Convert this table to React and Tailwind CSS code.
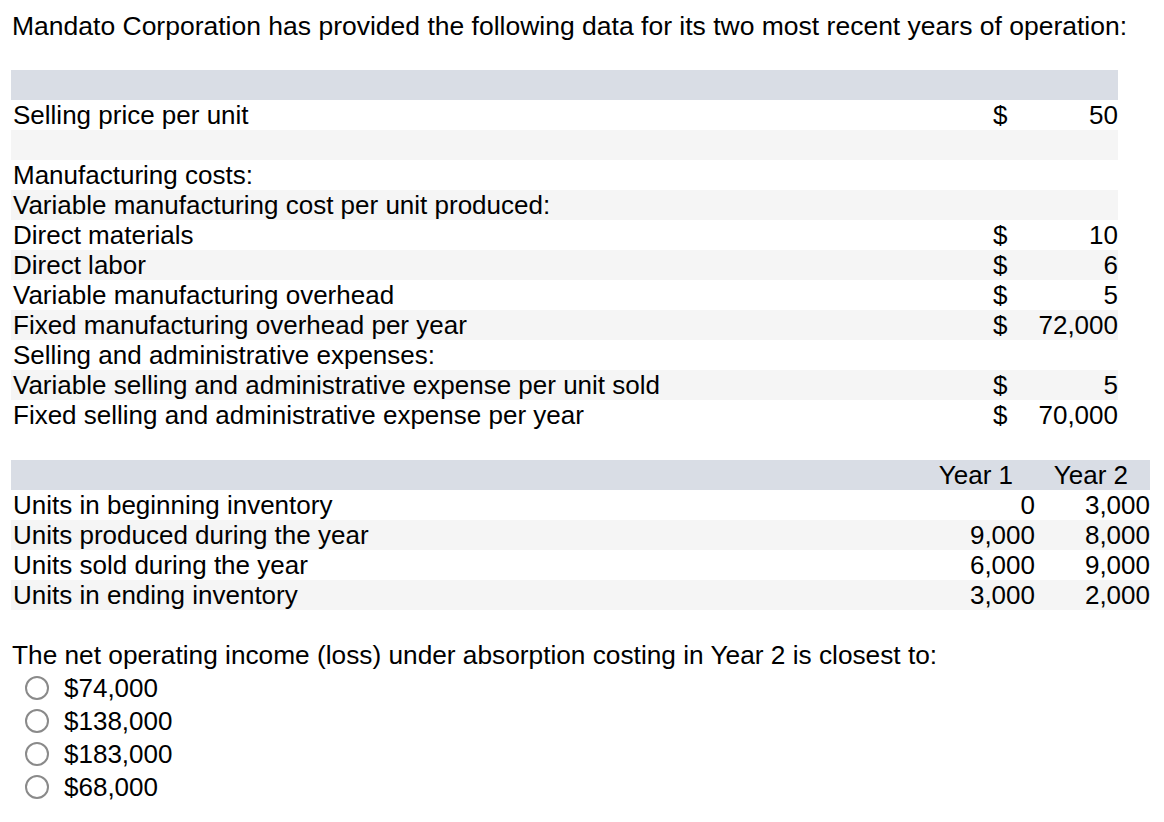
import React from "react";

// first table: label, dollar sign, amount, shaded row
const costRows = [
  { label: "Selling price per unit", dollar: true, amount: "50" },
  { label: "", shade: true },
  { label: "Manufacturing costs:" },
  { label: "Variable manufacturing cost per unit produced:", shade: true },
  { label: "Direct materials", dollar: true, amount: "10" },
  { label: "Direct labor", dollar: true, amount: "6", shade: true },
  { label: "Variable manufacturing overhead", dollar: true, amount: "5" },
  { label: "Fixed manufacturing overhead per year", dollar: true, amount: "72,000", shade: true },
  { label: "Selling and administrative expenses:" },
  { label: "Variable selling and administrative expense per unit sold", dollar: true, amount: "5", shade: true },
  { label: "Fixed selling and administrative expense per year", dollar: true, amount: "70,000" },
];

const unitRows = [
  { label: "Units in beginning inventory", y1: "0", y2: "3,000" },
  { label: "Units produced during the year", y1: "9,000", y2: "8,000", shade: true },
  { label: "Units sold during the year", y1: "6,000", y2: "9,000" },
  { label: "Units in ending inventory", y1: "3,000", y2: "2,000", shade: true },
];

const choices = ["$74,000", "$138,000", "$183,000", "$68,000"];

export default function App() {
  return (
    <div className="w-[1164px] h-[822px] bg-white text-black text-[26px] leading-[30px] font-['Liberation_Sans',Arial,sans-serif]">
      <p className="pl-3 pt-[11px] text-[26.5px] whitespace-nowrap">
        Mandato Corporation has provided the following data for its two most recent years of operation:
      </p>

      {/* cost data */}
      <div className="mt-[29px] ml-[11px] w-[1107px]">
        <div className="h-[30px] bg-[#d9dde5]"></div>
        {costRows.map((row, i) => (
          <div key={i} className={`flex h-[30px] ${row.shade ? "bg-[#f5f5f5]" : "bg-white"}`}>
            <span className="flex-1 pl-[2px] whitespace-nowrap">{row.label}</span>
            <span className="w-[30px]">{row.dollar ? "$" : ""}</span>
            <span className="w-[95px] text-right">{row.amount}</span>
          </div>
        ))}
      </div>

      {/* units data */}
      <div className="mt-[30px] ml-[11px] w-[1139px]">
        <div className="flex h-[30px] bg-[#d9dde5]">
          <span className="flex-1"></span>
          <span className="w-[115px] text-right pr-[22px]">Year 1</span>
          <span className="w-[115px] text-right pr-[22px]">Year 2</span>
        </div>
        {unitRows.map((row, i) => (
          <div key={i} className={`flex h-[30px] ${row.shade ? "bg-[#f5f5f5]" : "bg-white"}`}>
            <span className="flex-1 pl-[2px] whitespace-nowrap">{row.label}</span>
            <span className="w-[115px] text-right">{row.y1}</span>
            <span className="w-[115px] text-right">{row.y2}</span>
          </div>
        ))}
      </div>

      {/* question */}
      <p className="mt-[30px] pl-3 text-[26.25px] whitespace-nowrap">
        The net operating income (loss) under absorption costing in Year 2 is closest to:
      </p>
      <div className="mt-[1px]">
        {choices.map((c) => (
          <label key={c} className="flex items-center h-[33px] pl-[25px]">
            <span className="w-[24px] h-[24px] rounded-full border-2 border-[#8a8a8a] bg-white"></span>
            <span className="ml-[15px]">{c}</span>
          </label>
        ))}
      </div>
    </div>
  );
}
